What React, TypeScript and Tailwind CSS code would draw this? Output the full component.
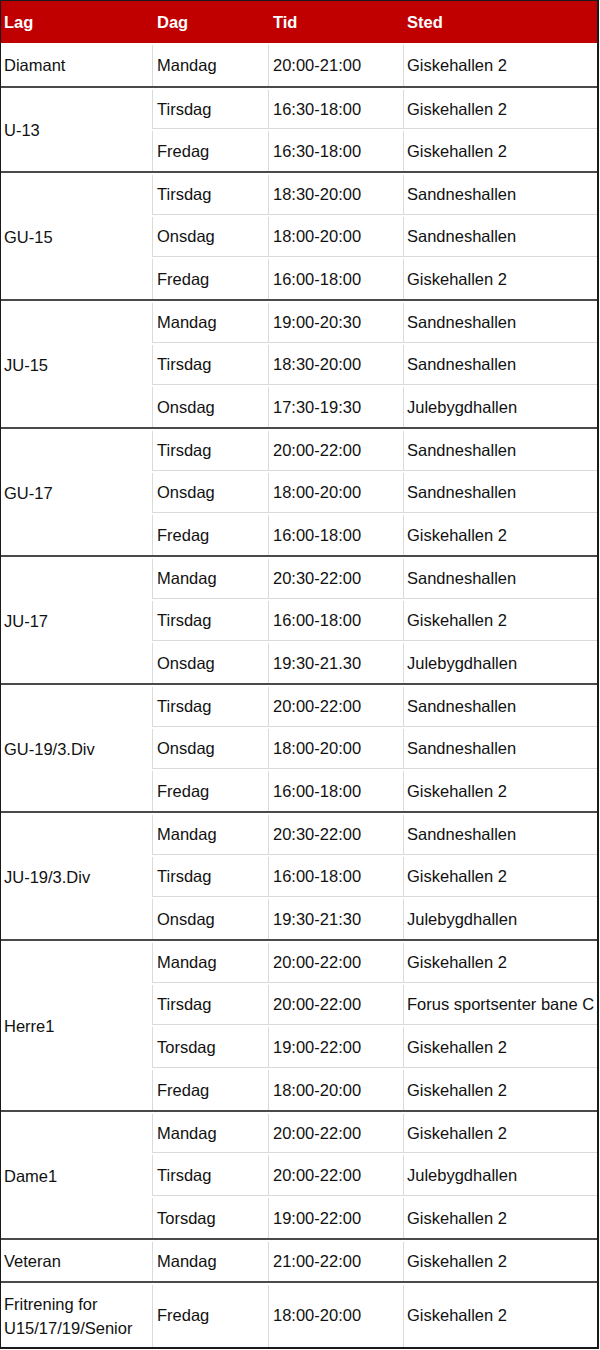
type Row = [string, string, string];
type Group = { lag: string[]; rows: Row[]; h?: number };

const groups: Group[] = [
    { lag: ["Diamant"], rows: [["Mandag", "20:00-21:00", "Giskehallen 2"]] },
    {
        lag: ["U-13"], rows: [
            ["Tirsdag", "16:30-18:00", "Giskehallen 2"],
            ["Fredag", "16:30-18:00", "Giskehallen 2"],
        ]
    },
    {
        lag: ["GU-15"], rows: [
            ["Tirsdag", "18:30-20:00", "Sandneshallen"],
            ["Onsdag", "18:00-20:00", "Sandneshallen"],
            ["Fredag", "16:00-18:00", "Giskehallen 2"],
        ]
    },
    {
        lag: ["JU-15"], rows: [
            ["Mandag", "19:00-20:30", "Sandneshallen"],
            ["Tirsdag", "18:30-20:00", "Sandneshallen"],
            ["Onsdag", "17:30-19:30", "Julebygdhallen"],
        ]
    },
    {
        lag: ["GU-17"], rows: [
            ["Tirsdag", "20:00-22:00", "Sandneshallen"],
            ["Onsdag", "18:00-20:00", "Sandneshallen"],
            ["Fredag", "16:00-18:00", "Giskehallen 2"],
        ]
    },
    {
        lag: ["JU-17"], rows: [
            ["Mandag", "20:30-22:00", "Sandneshallen"],
            ["Tirsdag", "16:00-18:00", "Giskehallen 2"],
            ["Onsdag", "19:30-21.30", "Julebygdhallen"],
        ]
    },
    {
        lag: ["GU-19/3.Div"], rows: [
            ["Tirsdag", "20:00-22:00", "Sandneshallen"],
            ["Onsdag", "18:00-20:00", "Sandneshallen"],
            ["Fredag", "16:00-18:00", "Giskehallen 2"],
        ]
    },
    {
        lag: ["JU-19/3.Div"], rows: [
            ["Mandag", "20:30-22:00", "Sandneshallen"],
            ["Tirsdag", "16:00-18:00", "Giskehallen 2"],
            ["Onsdag", "19:30-21:30", "Julebygdhallen"],
        ]
    },
    {
        lag: ["Herre1"], rows: [
            ["Mandag", "20:00-22:00", "Giskehallen 2"],
            ["Tirsdag", "20:00-22:00", "Forus sportsenter bane C"],
            ["Torsdag", "19:00-22:00", "Giskehallen 2"],
            ["Fredag", "18:00-20:00", "Giskehallen 2"],
        ]
    },
    {
        lag: ["Dame1"], rows: [
            ["Mandag", "20:00-22:00", "Giskehallen 2"],
            ["Tirsdag", "20:00-22:00", "Julebygdhallen"],
            ["Torsdag", "19:00-22:00", "Giskehallen 2"],
        ]
    },
    { lag: ["Veteran"], rows: [["Mandag", "21:00-22:00", "Giskehallen 2"]], h: 43 },
    { lag: ["Fritrening for", "U15/17/19/Senior"], rows: [["Fredag", "18:00-20:00", "Giskehallen 2"]], h: 66 },
];

const ROW_H = 42.68;
const SEP = 2; // dark group separator, px

const GroupRows = ({ group, first }: { group: Group, first: boolean }) => {
    const rowH = group.h ?? ROW_H;
    return (
        <div className={`flex ${first ? "" : "border-t-2 border-[#4a4a4a]"}`}>
            <div className="w-[151px] shrink-0 flex flex-col justify-center pl-[3px] pt-[2px] leading-[24px]">
                {group.lag.map((l) => <span key={l}>{l}</span>)}
            </div>
            <div className="flex-1 flex flex-col">
                {group.rows.map((r, i) => (
                    <div
                        key={i}
                        style={{ height: rowH - (i === 0 && !first ? SEP : 0) }}
                        className={`flex pt-[2px] ${i > 0 ? "border-t border-[#dadada]" : ""}`}
                    >
                        <div className="w-[116px] shrink-0 border-l border-[#dadada] pl-[4px] flex items-center">{r[0]}</div>
                        <div className="w-[135px] shrink-0 border-l border-[#dadada] pl-[4px] flex items-center">{r[1]}</div>
                        <div className="flex-1 border-l border-[#dadada] pl-[3px] flex items-center whitespace-nowrap">{r[2]}</div>
                    </div>
                ))}
            </div>
        </div>
    )
}

export default function App() {
    return (
        <div className="w-[600px] h-[1350px] bg-white text-[#111] text-[16.5px]" style={{ fontFamily: '"Liberation Sans", Arial, sans-serif' }}>
            <div className="w-[599px] border-l border-r-2 border-b-2 border-t border-[#1a1a1a]">
                <div className="h-[42px] bg-[#c00000] flex items-center text-white font-bold">
                    <div className="w-[151px] pl-[3px]">Lag</div>
                    <div className="w-[116px] pl-[5px]">Dag</div>
                    <div className="w-[135px] pl-[5px]">Tid</div>
                    <div className="flex-1 pl-[4px]">Sted</div>
                </div>
                {groups.map((g, i) => <GroupRows key={i} group={g} first={i === 0} />)}
            </div>
        </div>
    )
}
